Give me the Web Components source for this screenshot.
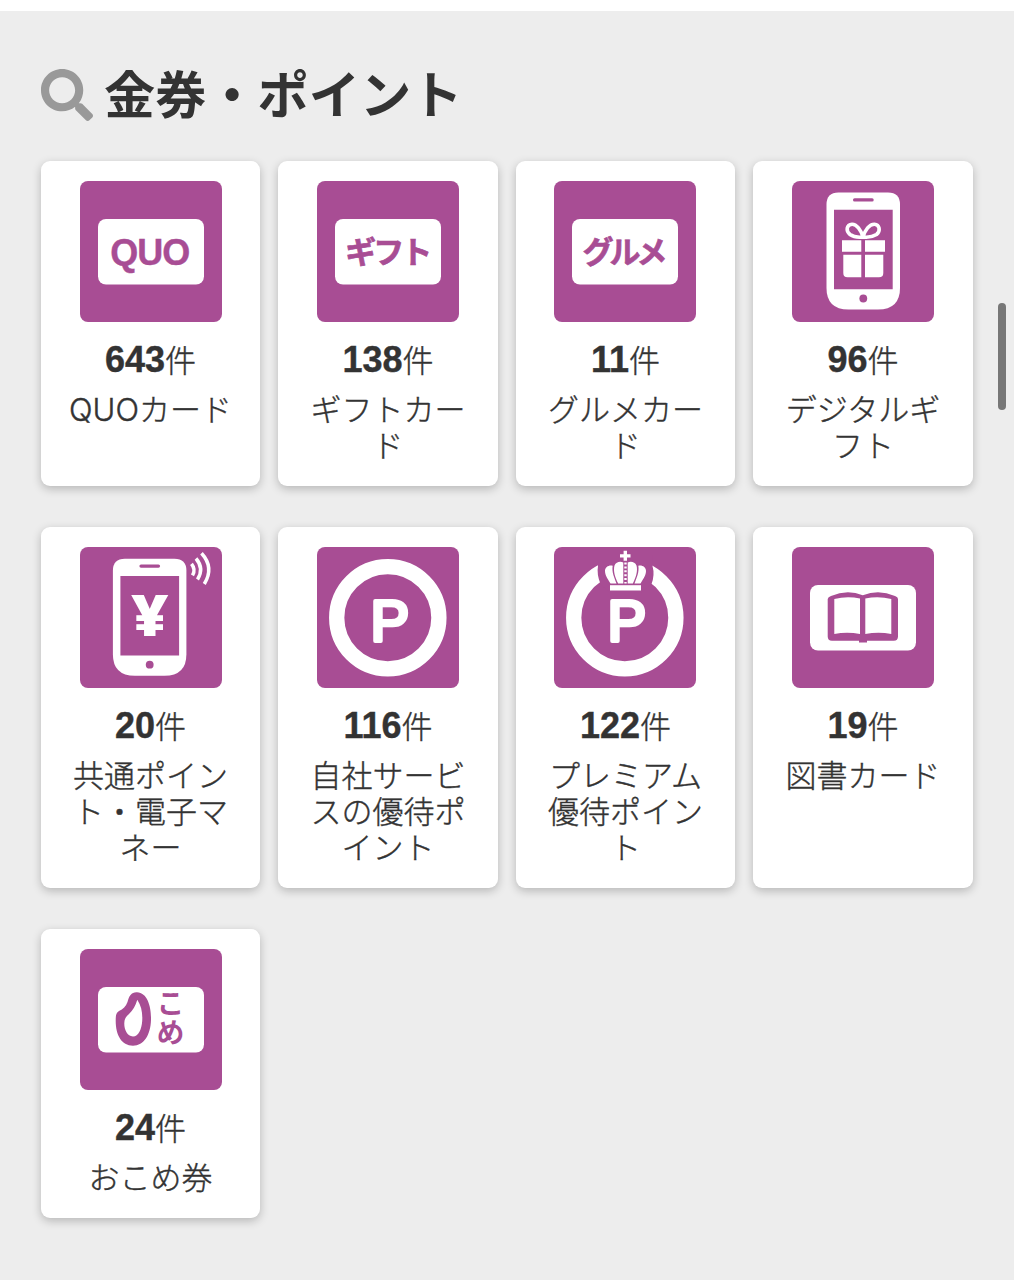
<!DOCTYPE html>
<html lang="ja">
<head>
<meta charset="utf-8">
<title>金券・ポイント</title>
<style>
html, body {
  margin: 0;
  height: 100%;
}
body {
  background: #ededed;
  color: #333;
  font-family: "Liberation Sans", "Noto Sans CJK JP", sans-serif;
  overflow: hidden;
}
</style>
</head>
<body>
<benefit-page>
  <section-title slot="title">金券・ポイント</section-title>
  <benefit-card icon="quo" count="643">QUOカード</benefit-card>
  <benefit-card icon="gift" count="138">ギフトカード</benefit-card>
  <benefit-card icon="gourmet" count="11">グルメカード</benefit-card>
  <benefit-card icon="digital" count="96">デジタルギフト</benefit-card>
  <benefit-card icon="emoney" count="20">共通ポイント・電子マネー</benefit-card>
  <benefit-card icon="point" count="116">自社サービスの優待ポイント</benefit-card>
  <benefit-card icon="premium" count="122">プレミアム優待ポイント</benefit-card>
  <benefit-card icon="book" count="19">図書カード</benefit-card>
  <benefit-card icon="rice" count="24">おこめ券</benefit-card>
</benefit-page>

<script>
const plate = '<rect class="w" x="18" y="38" width="106" height="65.5" rx="8"/>';

const phone = `
<path class="w" d="M46.500 11.500H96Q108 11.500 108 23.500V107Q108 128.500 86 128.500H56.500Q34.500 128.500 34.500 107V23.500Q34.500 11.500 46.500 11.500Z"/>
<path class="p" d="M42 28.700H100.700V108.300H42Z"/>
<rect class="p" x="61" y="17.200" width="20.700" height="3.300" rx="1.600"/>
<circle class="p" cx="71.300" cy="117.500" r="3.900"/>`;

const ring = '<circle class="ring" cx="70.800" cy="70.700" r="51.100"/>';
const letterP = '<text class="letter" x="53.500" y="93.600">P</text>';

// every icon is drawn on a 142 x 142 tile
const icons = {
  quo: `${plate}<text class="p bold" x="70.300" y="83.700" font-size="36" text-anchor="middle" textLength="80">QUO</text>`,

  gift: `${plate}<text class="p jp" x="28.300" y="82" font-size="31" textLength="87" lengthAdjust="spacing">ギフト</text>`,

  gourmet: `${plate}<text class="p jp" x="28.500" y="82" font-size="31" textLength="85" lengthAdjust="spacing">グルメ</text>`,

  digital: `${phone}
<path class="line" stroke-width="3.600" d="M71 56C69 49 64.500 43 60 43.200C54.500 43.500 53.500 50 58 53.500C61.500 56 67 56.500 71 56C75 56.500 80.500 56 84.500 53.500C89 50 87.500 43.500 82.500 43.200C77.500 43 73 49 71 56"/>
<path class="w" d="M50 59.300H69.300V70.700H50ZM73 59.300H93V70.700H73ZM51.300 73.700H69.300V96.300H55.500Q51.300 96.300 51.300 92ZM73 73.700H91.300V92Q91.300 96.300 87 96.300H73Z"/>`,

  emoney: `<g transform="translate(-1.600 .2)">${phone}</g>
<text class="w yen" x="51" y="88.800" font-size="56.500" textLength="37.500" lengthAdjust="spacingAndGlyphs">¥</text>
<path class="line" stroke-width="3.500" d="M111.500 16.800Q116 22.500 112.500 28.300M116 11.500Q124.500 21.500 117.500 32.500M121.500 6.300Q134.500 20.500 124.300 37"/>`,

  point: ring + letterP,

  premium: `${ring}
<path class="p" d="M44 8V19Q42.500 27 46.500 37L56 46H87L97.500 37Q101 28 98.500 19V8Z"/>
<path class="w" d="M69.600 3.700H73V7.200H76.500V10.400H73V13.700H69.600V10.400H66V7.200H69.600Z"/>
<rect class="w" x="56" y="38.200" width="31" height="5.300"/>
<path class="w" d="M56.500 36.600C53.500 31.500 51 28 51 24C51 20 55 17.800 58.700 18.800C57.500 25 60.500 31 62.500 36.600Z
M64.200 36.600C61 30 59 24 60.500 18.500C62 15 66 14 69.300 15.500V36.600Z
M86.500 36.600C89.500 31.500 92 28 92 24C92 20 88 17.800 84.300 18.800C85.500 25 82.500 31 80.500 36.600Z
M78.800 36.600C82 30 84 24 82.500 18.500C81 15 77 14 73.700 15.500V36.600Z"/>
<path stroke="#fff" stroke-width="2.400" stroke-dasharray="2 1.900" d="M71.500 15.500V36.600"/>
${letterP}`,

  book: `${plate}
<path class="p" d="M35.700 52Q36 50 39 49Q55 42 70.800 48.200Q87 42 103 49Q106 50 106 52V89.500Q106 93.700 101.700 93.700H75V95.500H67V93.700H40Q35.700 93.700 35.700 89.500Z"/>
<path class="w" d="M42.300 52Q55 48.700 68 51.500V87Q55 84.500 42.300 87ZM73.300 51.500Q86.500 48.700 99.300 52V87Q86.500 84.500 73.300 87Z"/>`,

  rice: `${plate}
<path class="p" d="M57 43.300C67.500 43.700 71.500 58 71 71C70.500 86 64 96.700 53 96.700C41.500 96.700 35.700 86 35.700 72C35.700 66 36 64 39 62C43 60 46 57.500 47.500 53C49 47 51.500 43 57 43.300Z"/>
<path class="w" d="M57.300 50.700C61.500 57 62.700 64 62.200 72C61.700 80 58.500 87.500 53 87.500C47 87.500 44 80 44.300 74C44.500 69.500 46 67.500 49 65C53 61 55.500 57 57.300 50.700Z"/>
<text class="p kana" x="90.500" y="40.500" font-size="28" letter-spacing=".8">こめ</text>`
};

class BenefitIcon extends HTMLElement {
  constructor() {
    super();
    this.attachShadow({ mode: 'open' });
  }

  connectedCallback() {
    this.shadowRoot.innerHTML = `
<style>
:host {
  display: block;
  width: 142px;
  height: 141px;
  border-radius: 8px;
  background: #a84d94;
  overflow: hidden;
}
svg { display: block; width: 142px; height: 142px; }
.w { fill: #fff; }
.p { fill: #a84d94; }
.line { fill: none; stroke: #fff; }
.ring { fill: none; stroke: #fff; stroke-width: 15.300; }
.bold { font-weight: bold; stroke: #a84d94; stroke-width: .4; }
.jp { font-family: "Noto Sans CJK JP", sans-serif; font-weight: 700; stroke: #a84d94; stroke-width: .7; }
.kana { font-family: "Noto Sans CJK JP", sans-serif; font-weight: 700; writing-mode: vertical-rl; }
.yen { font-family: "Open Sans", sans-serif; font-weight: 800; }
.letter { fill: #fff; stroke: #fff; stroke-width: 4; stroke-linejoin: round; font-size: 58px; }
</style>
<svg viewBox="0 0 142 142">${icons[this.getAttribute('name')]}</svg>`;
  }
}
customElements.define('benefit-icon', BenefitIcon);

class BenefitCard extends HTMLElement {
  constructor() {
    super();
    this.attachShadow({ mode: 'open' });
  }

  connectedCallback() {
    this.shadowRoot.innerHTML = `
<style>
:host {
  display: flex;
  flex-direction: column;
  align-items: center;
  box-sizing: border-box;
  padding: 20px 20px 22px;
  border-radius: 9px;
  background: #fff;
  box-shadow: 0 3px 10px rgba(0, 0, 0, .23);
}
.count {
  height: 36px;
  margin-top: 20px;
  line-height: 36px;
  font-size: 31px;
  font-weight: 300;
  -webkit-text-stroke: .4px;
  white-space: nowrap;
}
b { font-size: 36px; font-weight: bold; }
.label {
  margin-top: 14px;
  width: 179px;
  line-height: 36px;
  font-family: Inter, "Noto Sans CJK JP", sans-serif;
  font-size: 31px;
  font-weight: 300;
  -webkit-text-stroke: .4px;
  text-align: center;
}
</style>
<benefit-icon name="${this.getAttribute('icon')}"></benefit-icon>
<div class="count"><b>${this.getAttribute('count')}</b>件</div>
<div class="label"><slot></slot></div>`;
  }
}
customElements.define('benefit-card', BenefitCard);

const titleTemplate = document.createElement('template');
titleTemplate.innerHTML = `
<style>
:host { display: flex; align-items: center; gap: 11px; }
svg { width: 52px; height: 52px; fill: #999; }
h2 { margin: 2px 0 -2px; font-size: 51.200px; line-height: 60px; font-weight: bold; }
</style>
<svg viewBox="0 0 512 512"><path d="M505 442.700L405.300 343c-4.500-4.500-10.600-7-17-7H372c27.600-35.300 44-79.700 44-128C416 93.100 322.900 0 208 0S0 93.100 0 208s93.100 208 208 208c48.300 0 92.700-16.400 128-44v16.300c0 6.400 2.500 12.500 7 17l99.700 99.700c9.400 9.400 24.600 9.400 33.900 0l28.300-28.300c9.400-9.400 9.400-24.600.1-34zM208 336c-70.700 0-128-57.200-128-128 0-70.700 57.200-128 128-128 70.700 0 128 57.200 128 128 0 70.700-57.200 128-128 128z"/></svg>
<h2><slot></slot></h2>
`;
class SectionTitle extends HTMLElement {
  constructor() {
    super();
    this.attachShadow({ mode: 'open' });
    this.shadowRoot.appendChild(titleTemplate.content.cloneNode(true));
  }
}
customElements.define('section-title', SectionTitle);

const pageTemplate = document.createElement('template');
pageTemplate.innerHTML = `
<style>
:host {
  display: block;
  position: relative;
  box-sizing: border-box;
  height: 1280px;
  border-top: 11px solid #fff;
  padding: 54px 41.500px 0 41px;
}
.grid {
  display: grid;
  grid-template-columns: repeat(4, 1fr);
  column-gap: 18.400px;
  row-gap: 41px;
  margin-top: 36px;
}
/* scroll thumb floats over the page */
.thumb {
  position: absolute;
  top: 292px;
  right: 8px;
  width: 8px;
  height: 107px;
  border-radius: 4px;
  background: #777;
}
</style>
<slot name="title"></slot>
<div class="grid"><slot></slot></div>
<div class="thumb"></div>
`;
class BenefitPage extends HTMLElement {
  constructor() {
    super();
    this.attachShadow({ mode: 'open' });
    this.shadowRoot.appendChild(pageTemplate.content.cloneNode(true));
  }
}
customElements.define('benefit-page', BenefitPage);
</script>
</body>
</html>
